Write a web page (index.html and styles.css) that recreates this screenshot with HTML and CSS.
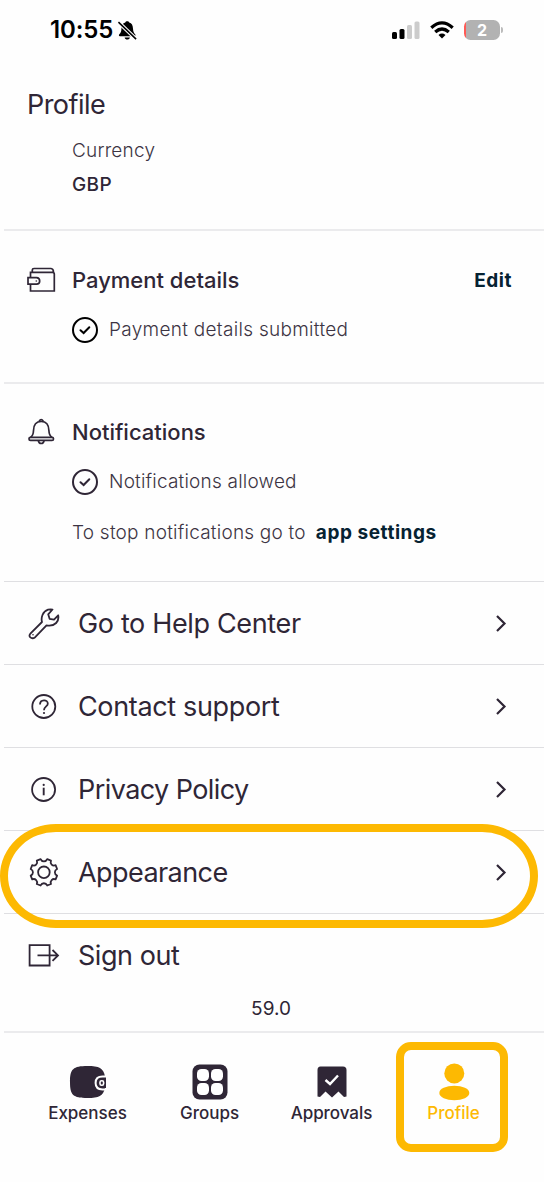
FILE: index.html
```html
<!DOCTYPE html>
<html lang="en">
<head>
<meta charset="utf-8">
<title>Profile</title>
<link rel="stylesheet" href="styles.css">
</head>
<body>
<div class="screen">
  <header class="status">
    <div class="clock"><span class="time">10:55</span>
      <svg class="muted" width="21" height="21" viewBox="0 0 22 22"><path d="M3 17C2 17 1.600 16 2.400 15 4 13.500 4.500 12 4.600 9.500 4.700 5.500 6 3.300 8.700 2.600 9 1 12.400 1 12.800 2.600 15.500 3.300 16.600 5.500 16.800 9.500 17 12 17.500 13.500 19 15 19.800 16 19.300 17 18.300 17ZM8 18.300H13.500C13 21.100 8.500 21.100 8 18.300Z" fill="#000"/><path d="M1.500 2.200 20 20" stroke="#fff" stroke-width="3.800"/><path d="M1.500 2.200 20 20" stroke="#000" stroke-width="1.600"/></svg>
    </div>
    <div class="signals">
      <svg width="28" height="18" viewBox="0 0 28 18"><rect x="0" y="11" width="5" height="7" rx="1.500"/><rect x="7.500" y="8" width="5" height="10" rx="1.500"/><rect x="15" y="4" width="5" height="14" rx="1.500" fill="#ccc"/><rect x="22.500" y="0.500" width="5" height="17.500" rx="1.500" fill="#ccc"/></svg>
      <svg class="wifi" width="24" height="18" viewBox="0 0 24 18" fill="none" stroke="#000" stroke-width="3.200"><path d="M1.300 6.800Q12-3 22.700 6.800"/><path d="M5.200 11Q12 5 18.800 11"/><path d="M12 17.500 8.500 14Q12 11.200 15.500 14Z" fill="#000" stroke="none"/></svg>
      <span class="battery"><span class="level">2</span></span><span class="cap"></span>
    </div>
  </header>

  <h1 class="title">Profile</h1>
  <section class="currency">
    <p class="light cur">Currency</p>
    <p class="gbp">GBP</p>
  </section>

  <section class="section payment">
    <div class="head">
      <svg width="30" height="26" viewBox="0 0 30 26" fill="none" stroke="#2f2636" stroke-width="1.700"><path d="M3.500 10.500V5.300H25.500Q27.300 5.300 27.300 7V24H3.500V17.500M5.300 5V3Q5.300 1.500 7 1.500H24Q26.500 1.700 26.500 5.500"/><path d="M1 10.700H9.500Q12.700 10.900 12.700 14T9.500 17.200H1Z"/><circle cx="9.300" cy="14" r=".8" fill="#2f2636" stroke="none"/></svg>
      <h2 class="pd">Payment details</h2><a class="link edit">Edit</a>
    </div>
    <div class="state">
      <svg width="26" height="26" viewBox="0 0 26 26" fill="none" stroke="#000" stroke-width="2"><circle cx="13" cy="13" r="12"/><path d="M8.500 13.200 11.600 16 17.300 10.200" stroke-linecap="round"/></svg>
      <span class="light pds">Payment details submitted</span>
    </div>
  </section>

  <section class="section notifications">
    <div class="head">
      <svg width="28" height="28" viewBox="0 0 28 28" fill="none" stroke="#2f2636" stroke-width="1.700"><path d="M2.500 19.500Q5.300 17.500 5.500 12.500C5.600 6.500 8.500 3.500 13.200 3.500S20.800 6.500 20.900 12.500Q21.100 17.500 24 19.500"/><path d="M11 3.500Q13.200-.2 15.400 3.500M10.300 22.500Q10.800 25.500 13.200 25.500T16.100 22.500"/><rect x="1" y="19.300" width="24.500" height="3.100" rx="1.500"/></svg>
      <h2 class="nt">Notifications</h2>
    </div>
    <div class="state">
      <svg width="26" height="26" viewBox="0 0 26 26" fill="none" stroke="#2f2636" stroke-width="2"><circle cx="13" cy="13" r="12"/><path d="M8.500 13.200 11.600 16 17.300 10.200" stroke-linecap="round"/></svg>
      <span class="light na">Notifications allowed</span>
    </div>
    <p class="stop"><span class="light sn">To stop notifications go to</span><a class="link as">app settings</a></p>
  </section>

  <nav class="menu">
    <a class="row"><svg width="32" height="32" viewBox="0 0 32 32" fill="none" stroke="#2f2636" stroke-width="1.800" stroke-linejoin="round"><path d="M2.600 25.300 14 14C12.800 10 14.500 3.500 20 1.700Q22.500 1 24.500 1.500L20.200 6.300 21.600 10.800 26 11.700 30.200 7.300C31.300 13 27.500 18.800 18.500 17.300L7.200 29.200C3.500 31.800-.5 28.500 2.600 25.300Z"/><circle cx="5" cy="26.800" r=".8" fill="#2f2636" stroke="none"/></svg><span class="r1">Go to Help Center</span><svg class="chev" width="12" height="18" viewBox="0 0 12 18"><path d="M2 1 9.500 8.500 2 16"/></svg></a>
    <a class="row"><svg width="32" height="32" viewBox="0 0 32 32" fill="none" stroke="#2f2636" stroke-width="1.800"><circle cx="15.800" cy="15.500" r="11.500"/><path d="M12 13.500C12 8 20 8.200 19.800 12.700 19.700 15.500 16 15.500 16 19.300"/><circle cx="16" cy="22" r="1.100" fill="#2f2636" stroke="none"/></svg><span class="r2">Contact support</span><svg class="chev" width="12" height="18" viewBox="0 0 12 18"><path d="M2 1 9.500 8.500 2 16"/></svg></a>
    <a class="row"><svg width="32" height="32" viewBox="0 0 32 32" fill="none" stroke="#2f2636" stroke-width="1.800"><circle cx="15.600" cy="15.500" r="11.500"/><path d="M15.700 13.700V21.300" stroke-width="1.900"/><circle cx="15.700" cy="10.900" r="1.100" fill="#2f2636" stroke="none"/></svg><span class="r3">Privacy Policy</span><svg class="chev" width="12" height="18" viewBox="0 0 12 18"><path d="M2 1 9.500 8.500 2 16"/></svg></a>
    <a class="row marked"><svg width="32" height="32" viewBox="0 0 32 32" fill="none" stroke="#2f2636" stroke-width="1.800" stroke-linejoin="round"><g transform="translate(15.900 15.300)"><path d="M-3.300-13.200C-2-10.200 2-10.200 3.300-13.200L7.100-11.700C5.800-8.600 8.600-5.800 11.700-7.100L13.200-3.300C10.200-2 10.200 2 13.200 3.300L11.700 7.100C8.600 5.800 5.800 8.600 7.100 11.700L3.300 13.200C2 10.200-2 10.200-3.300 13.200L-7.100 11.700C-5.800 8.600-8.600 5.800-11.700 7.100L-13.200 3.300C-10.200 2-10.200-2-13.200-3.300L-11.700-7.100C-8.600-5.800-5.800-8.600-7.100-11.700Z"/><circle r="5.800"/></g></svg><span class="r4">Appearance</span><svg class="chev" width="12" height="18" viewBox="0 0 12 18"><path d="M2 1 9.500 8.500 2 16"/></svg></a>
    <a class="row last"><svg width="32" height="32" viewBox="0 0 32 32" fill="none" stroke="#2f2636" stroke-width="1.800"><path d="M1.600 5.200H21.600V25.500H1.600ZM9.500 15.400H30M24.500 10 30 15.400 24.500 20.800"/></svg><span class="r5">Sign out</span></a>
  </nav>
  <p class="version">59.0</p>

  <nav class="tabs">
    <a class="tab"><svg width="38" height="38" viewBox="0 0 38 38"><path d="M1 19C1 6 4 3 18.500 3 30 3 34.500 5 36 13.500H37V25H36C34 33 30 35 18.500 35 4 35 1 32 1 19Z" fill="#2f2636"/><path d="M38 13.600H33.500Q26.600 13.600 26.600 20T33.500 26.500H38" fill="none" stroke="#fff" stroke-width="2"/><rect x="31" y="17.800" width="3.600" height="4.500" rx="1.500" fill="none" stroke="#fff" stroke-width="1.600"/></svg><span class="t1">Expenses</span></a>
    <a class="tab"><svg width="38" height="38" viewBox="0 0 38 38"><rect x="1.500" y="1.500" width="35" height="35" rx="7" fill="#2f2636"/><g fill="#fff"><rect x="6" y="6" width="12" height="12" rx="4.500"/><rect x="20" y="6" width="12" height="12" rx="4.500"/><rect x="6" y="20" width="12" height="12" rx="4.500"/><rect x="20" y="20" width="12" height="12" rx="4.500"/></g></svg><span class="t2">Groups</span></a>
    <a class="tab"><svg width="38" height="38" viewBox="0 0 38 38"><path d="M7.500 3.500H30Q33.500 3.500 33.500 7V33.500L31 34 25.500 28.500 19 34.500 12.500 28.500 7 34 4.500 33.500V7Q4.500 3.500 7.500 3.500Z" fill="#2f2636"/><path d="M12.500 17 17 21 25 12.500" fill="none" stroke="#fff" stroke-width="2.400"/></svg><span class="t3">Approvals</span></a>
    <a class="tab active"><svg width="38" height="38" viewBox="0 0 38 38" fill="#fdb902"><circle cx="19.300" cy="10.400" r="10"/><ellipse cx="19.300" cy="30" rx="15" ry="7.300"/></svg><span class="t4">Profile</span></a>
  </nav>
</div>
</body>
</html>
```
FILE: styles.css
```css
*, *::after { box-sizing: border-box; }
body { margin: 0; background: #fefefe; color: #2f2636; font-family: Inter, "Liberation Sans", sans-serif; }
h1, h2, p { margin: 0; font-weight: 400; }
svg { display: block; flex: none; }
span, a, h1, h2, p { white-space: nowrap; }
.screen { width: 544px; height: 1182px; overflow: hidden; display: flex; flex-direction: column; }
.status { height: 60px; padding: 0 41px 0 50px; display: flex; justify-content: space-between; align-items: center; color: #000; }
.clock { display: flex; align-items: center; gap: 4px; }
.time { font-size: 24px; font-weight: 600; line-height: 30px; letter-spacing: -0.100px; }
.signals { display: flex; align-items: center; }
.wifi { margin-left: 10px; }
.battery { margin-left: 10px; width: 36px; height: 20px; border-radius: 6.500px; background: linear-gradient(90deg, #ff5a55 2px, #b2b2b2 2px); display: flex; justify-content: center; align-items: center; }
.level { color: #fff; font-size: 16px; font-weight: 700; line-height: 20px; }
.cap { width: 2px; height: 6px; margin-left: 1px; border-radius: 0 2px 2px 0; background: #bbb; }
.title { height: 74px; padding: 30px 0 0 27px; font-size: 27px; line-height: 30px; letter-spacing: -0.550px; }
.currency { height: 95px; padding-left: 72px; font-size: 19px; line-height: 34px; }
.light { font-size: 19px; font-weight: 300; color: #3c3443; }
.cur { letter-spacing: 0.200px; }
.gbp { font-weight: 500; letter-spacing: 0.400px; }
.section { margin-left: 4px; border-top: 2px solid #ebebed; padding: 34px 32px 0 23px; }
.payment { height: 153px; }
.notifications { height: 199px; padding-top: 33px; }
.head { display: flex; align-items: center; height: 30px; }
.head > svg { width: 30px; }
h2 { margin-left: 15px; font-size: 22px; font-weight: 500; line-height: 30px; flex: 1; }
.link { font-size: 19px; font-weight: 700; color: #062232; letter-spacing: 0.550px; }
.state { display: flex; align-items: center; gap: 11px; margin: 20px 0 0 45px; height: 30px; line-height: 30px; }
.pds { letter-spacing: 0.300px; }
.na { letter-spacing: 0.200px; }
.sn { letter-spacing: 0.220px; }
.stop { display: flex; gap: 10px; margin: 21px 0 0 45px; line-height: 30px; }
.menu { margin-left: 4px; }
.row { display: flex; align-items: center; height: 83px; padding: 1px 37px 0 24px; border-top: 1px solid #dfdfe2; font-size: 27px; line-height: 34px; }
.row > span { margin-left: 18px; flex: 1; }
.r1, .r2 { letter-spacing: -0.350px; }
.r3, .r4 { letter-spacing: -0.570px; }
.r5 { letter-spacing: -0.450px; }
.chev { fill: none; stroke: #2f2636; stroke-width: 2.200px; }
.marked { position: relative; }
.marked::after { content: ""; position: absolute; left: -4px; top: -7px; width: 538px; height: 104px; border: 8px solid #fdb902; border-radius: 56px / 52px; }
.version { height: 36px; line-height: 28px; margin-top: -1px; font-size: 19px; text-align: center; padding-right: 2px; }
.tabs { margin-left: 4px; border-top: 2px solid #ebebed; padding: 30px 29px 0 22.500px; display: grid; grid-template-columns: repeat(4, 122px); flex: 1; }
.tab { display: flex; flex-direction: column; align-items: center; gap: 2px; font-size: 17px; font-weight: 500; line-height: 20px; }
.t3 { letter-spacing: -0.050px; }
.active { color: #fdb902; position: relative; }
.active::after { content: ""; position: absolute; left: 3.500px; top: -21px; width: 112px; height: 110px; border: 8px solid #fdb902; border-radius: 15px; }
```
